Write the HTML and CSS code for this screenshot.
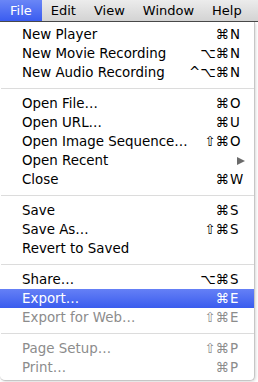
FILE: index.html
```html
<!DOCTYPE html>
<html lang="en">
<head>
    <meta charset="UTF-8">
    <title>File menu</title>
    <link rel="stylesheet" href="styles.css">
</head>
<body>
    <!-- Menüleiste -->
    <div class="menubar">
        <span class="title active">File</span>
        <span class="title">Edit</span>
        <span class="title">View</span>
        <span class="title">Window</span>
        <span class="title">Help</span>
    </div>

    <!-- Aufgeklapptes Menü -->
    <div class="menu">
        <div class="item"><span class="label">New Player</span><span class="mods">⌘</span><span class="key">N</span></div>
        <div class="item"><span class="label">New Movie Recording</span><span class="mods">⌥⌘</span><span class="key">N</span></div>
        <div class="item"><span class="label">New Audio Recording</span><span class="mods">^⌥⌘</span><span class="key">N</span></div>
        <div class="sep"></div>
        <div class="item"><span class="label">Open File…</span><span class="mods">⌘</span><span class="key">O</span></div>
        <div class="item"><span class="label">Open URL…</span><span class="mods">⌘</span><span class="key">U</span></div>
        <div class="item"><span class="label">Open Image Sequence…</span><span class="mods">⇧⌘</span><span class="key">O</span></div>
        <div class="item"><span class="label">Open Recent</span><span class="arrow"></span></div>
        <div class="item"><span class="label">Close</span><span class="mods">⌘</span><span class="key">W</span></div>
        <div class="sep"></div>
        <div class="item"><span class="label">Save</span><span class="mods">⌘</span><span class="key">S</span></div>
        <div class="item"><span class="label">Save As…</span><span class="mods">⇧⌘</span><span class="key">S</span></div>
        <div class="item"><span class="label">Revert to Saved</span></div>
        <div class="sep"></div>
        <div class="item"><span class="label">Share…</span><span class="mods">⌥⌘</span><span class="key">S</span></div>
        <div class="item selected"><span class="label">Export…</span><span class="mods">⌘</span><span class="key">E</span></div>
        <div class="item disabled"><span class="label">Export for Web…</span><span class="mods">⇧⌘</span><span class="key">E</span></div>
        <div class="sep"></div>
        <div class="item disabled"><span class="label">Page Setup…</span><span class="mods">⇧⌘</span><span class="key">P</span></div>
        <div class="item disabled"><span class="label">Print…</span><span class="mods">⌘</span><span class="key">P</span></div>
    </div>
</body>
</html>
```

FILE: styles.css
```css
/* Grundlayout */
body {
    margin: 0;
    background-color: #ffffff;
    font-family: "DejaVu Sans", sans-serif;
    font-size: 13.4px;
    color: #000;
    width: 258px;
    height: 382px;
    overflow: hidden;
}

/* Menüleiste oben */
.menubar {
    display: flex;
    height: 21px;
    background: linear-gradient(#ececec, #d3d3d3);
    border-bottom: 1px solid #4a4a4a;
    white-space: nowrap;
    font-size: 13px;
}

.title {
    padding: 0 9px;
    line-height: 21px;
}

.title.active {
    color: white;
    padding: 0 10px;
    background: linear-gradient(#6a86f6, #3a5cf0);
}

/* Menü */
.menu {
    width: 254px;
    padding: 3px 0;
    background-color: #ffffff;
    border-right: 1px solid #c6c6c6;
    border-bottom: 1px solid #c6c6c6;
    border-bottom-right-radius: 5px;
    border-bottom-left-radius: 5px;
    box-shadow: 1px 1px 3px rgba(0, 0, 0, 0.15);
}

.item {
    display: flex;
    align-items: center;
    height: 19px;
    padding: 0 12px 0 22px;
}

.label {
    flex: 1;
    white-space: nowrap;
}

.mods {
    text-align: right;
    padding-right: 1px;
}

.key {
    width: 12px;
    white-space: nowrap;
}

.arrow {
    width: 0;
    height: 0;
    border-top: 4.5px solid transparent;
    border-bottom: 4.5px solid transparent;
    border-left: 8px solid #6b6b6b;
    margin-right: -3px;
}

.item.selected {
    color: white;
    background: linear-gradient(#6580f6, #3a5cee);
}

.item.disabled {
    color: #8c8c8c;
}

/* Trennlinie */
.sep {
    height: 12px;
    position: relative;
}

.sep::after {
    content: "";
    position: absolute;
    left: 1px;
    right: 0;
    top: 6px;
    border-top: 1px solid #dcdcdc;
}
```
